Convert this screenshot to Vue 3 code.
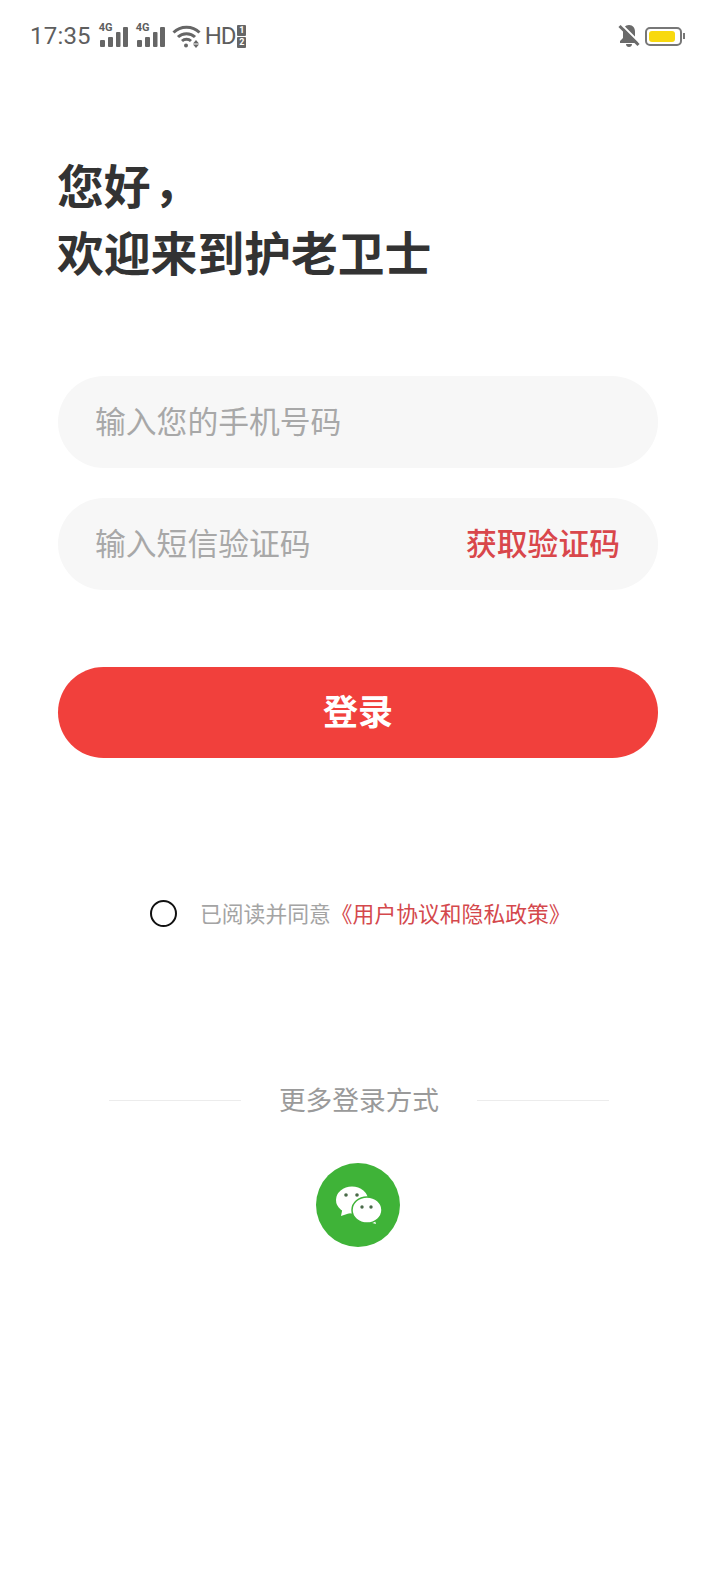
<template>
  <div class="page">
    <div class="status">
      <div class="status-left">
        <span class="time">17:35</span>
        <div class="signal" v-for="n in 2" :key="n">
          <span class="net">4G</span>
          <svg width="28" height="20" viewBox="0 0 28 20">
            <rect x="0" y="13" width="5" height="7" rx="1" />
            <rect x="8" y="10" width="5" height="10" rx="1" />
            <rect x="16" y="5" width="4.500" height="15" rx="1" />
            <rect x="23" y="0" width="5" height="20" rx="1" />
          </svg>
        </div>
        <svg class="wifi" width="29" height="24" viewBox="0 0 29 24" fill="none">
          <path d="M1.500 8.500C8.500 1.500 20.500 1.500 27.500 8.500" />
          <path d="M6 13C10.500 8.500 18.500 8.500 23 13" />
          <path d="M10 17C12.500 14.700 16.500 14.700 19 17" />
          <circle cx="14" cy="21.500" r="2" class="fill" />
          <path class="fill" d="M21 19.500h6l-3-3.500zM21 20.500h6l-3 3.500z" />
        </svg>
        <span class="hd">HD</span>
        <div class="sims">
          <span>1</span>
          <span>2</span>
        </div>
      </div>
      <div class="status-right">
        <svg width="22" height="24" viewBox="0 0 22 24">
          <path class="bell" d="M11 1c-4 0-6 3-6 7v6l-3 3v2h18v-2l-3-3V8c0-4-2-7-6-7zM8 20h6c0 2-1.300 3-3 3s-3-1-3-3z" />
          <path class="slash-halo" d="M3 0L23 20" />
          <path class="slash" d="M1.500 2L20.500 21" />
        </svg>
        <div class="battery">
          <div class="battery-fill"></div>
        </div>
      </div>
    </div>

    <div class="content">
      <h1 class="title">您好<span class="comma">，</span><br />欢迎来到护老卫士</h1>

      <div class="field">
        <span class="placeholder">输入您的手机号码</span>
      </div>
      <div class="field code">
        <span class="placeholder">输入短信验证码</span>
        <span class="get-code">获取验证码</span>
      </div>

      <button class="login">登录</button>

      <div class="agree">
        <span class="radio"></span>
        <span class="agree-text">已阅读并同意<em>《用户协议和隐私政策》</em></span>
      </div>

      <div class="more">
        <span class="line"></span>
        <span class="more-text">更多登录方式</span>
        <span class="line"></span>
      </div>

      <div class="wechat">
        <svg width="84" height="84" viewBox="0 0 84 84">
          <circle cx="42" cy="42" r="42" fill="#3fb338" />
          <path fill="#fff" d="M25 53L27 43L37 49z" />
          <ellipse cx="36" cy="37" rx="16" ry="13.500" fill="#fff" />
          <path fill="#fff" d="M60 61L57 51L49 58z" />
          <ellipse cx="51" cy="47" rx="15" ry="13" fill="#fff" stroke="#3fb338" stroke-width="1.500" />
          <circle cx="30" cy="32" r="1.800" fill="#4a6a48" />
          <circle cx="41" cy="32" r="1.800" fill="#4a6a48" />
          <circle cx="46" cy="44" r="1.700" fill="#4a6a48" />
          <circle cx="55" cy="44" r="1.700" fill="#4a6a48" />
        </svg>
      </div>
    </div>
  </div>
</template>

<script setup>
</script>

<style>
body {
  margin: 0;
  background: #fff;
}
</style>

<style scoped>
.page {
  width: 715px;
  height: 1595px;
  overflow: hidden;
  background: #fff;
  font-family: "Noto Sans CJK SC", sans-serif;
}

.status {
  height: 72px;
  padding: 0 33px 0 30px;
  box-sizing: border-box;
  display: flex;
  justify-content: space-between;
  align-items: center;
  color: #5e5e5e;
}

.status-left,
.status-right {
  display: flex;
  align-items: center;
}

.time {
  font: 24px Roboto, sans-serif;
  letter-spacing: 0.2px;
}

.signal {
  position: relative;
  width: 29px;
  height: 22px;
  margin-left: 8px;
}

.signal svg {
  position: absolute;
  right: 0;
  bottom: 0;
  fill: #666;
}

.net {
  position: absolute;
  left: 0;
  top: -3px;
  font: bold 11px/12px Roboto, sans-serif;
}

.wifi {
  margin-left: 7px;
}

.wifi path {
  stroke: #666;
  stroke-width: 3;
}

.wifi .fill {
  fill: #666;
  stroke: none;
}

.hd {
  margin-left: 4px;
  font: 24px Roboto, sans-serif;
  letter-spacing: -1.200px;
}

.sims {
  margin-left: 2px;
  display: flex;
  flex-direction: column;
  gap: 1px;
}

.sims span {
  width: 9px;
  height: 11px;
  background: #666;
  border-radius: 1px;
  color: #fff;
  font: bold 9px/11px Roboto, sans-serif;
  text-align: center;
}

.status-right {
  gap: 5px;
}

.bell {
  fill: #6a6a6a;
}

.slash-halo {
  stroke: #fff;
  stroke-width: 2;
  fill: none;
}

.slash {
  stroke: #6a6a6a;
  stroke-width: 3;
  fill: none;
}

.battery {
  position: relative;
  width: 37px;
  height: 19px;
  border: 2px solid #777;
  border-radius: 5px;
  box-sizing: border-box;
  padding: 2px 5px 2px 2px;
}

.battery::after {
  content: "";
  position: absolute;
  right: -5px;
  top: 4px;
  width: 2px;
  height: 6px;
  background: #777;
}

.battery-fill {
  height: 100%;
  background: #f8d90f;
  border-radius: 3px;
}

.content {
  padding: 78px 57px 0 58px;
}

.title {
  margin: 0;
  margin-left: -1px;
  font-size: 46.800px;
  line-height: 67px;
  font-weight: 700;
  color: #333;
}

.comma {
  position: relative;
  left: 3px;
  top: -3px;
}

.field {
  height: 92px;
  margin-top: 30px;
  padding: 0 38px 5px 37px;
  box-sizing: border-box;
  border-radius: 46px;
  background: #f7f7f7;
  display: flex;
  align-items: center;
  justify-content: space-between;
  font-size: 30.800px;
}

.title + .field {
  margin-top: 92px;
}

.placeholder {
  color: #a8a8a8;
}

.get-code {
  color: #d9474b;
  font-weight: 500;
}

.login {
  display: block;
  width: 100%;
  height: 91px;
  margin-top: 77px;
  padding: 0 0 6px;
  border: 0;
  border-radius: 46px;
  background: #f1403c;
  color: #fff;
  font-family: inherit;
  font-size: 35px;
  font-weight: 700;
}

.agree {
  margin-top: 139px;
  padding-left: 92px;
  display: flex;
  align-items: center;
  gap: 23px;
}

.radio {
  width: 27px;
  height: 27px;
  box-sizing: border-box;
  border: 2px solid #111;
  border-radius: 50%;
}

.agree-text {
  font-size: 21.800px;
  color: #a4a4a4;
  padding-bottom: 2px;
}

.agree-text em {
  font-style: normal;
  color: #d4484c;
}

.more {
  margin-top: 150px;
  padding: 0 49px 0 51px;
  display: flex;
  align-items: center;
  justify-content: space-between;
}

.line {
  width: 132px;
  height: 1px;
  background: #ececec;
}

.more-text {
  font-size: 26.700px;
  color: #9a9a9a;
  line-height: 38px;
  padding-bottom: 2px;
}

.wechat {
  margin-top: 43px;
  display: flex;
  justify-content: center;
}

.wechat svg {
  display: block;
}
</style>
